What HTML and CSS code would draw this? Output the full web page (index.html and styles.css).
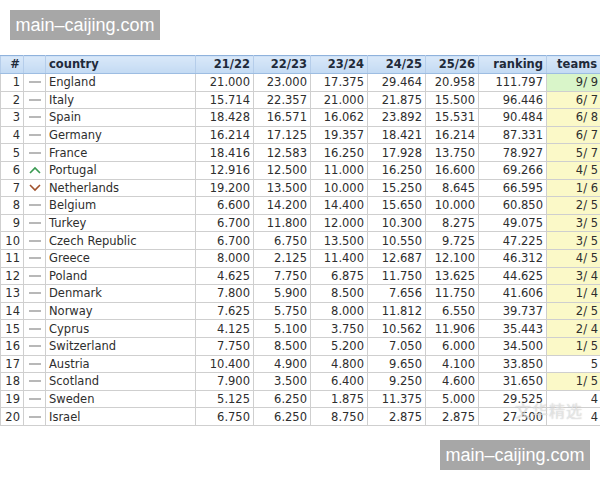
FILE: index.html
```html
<!DOCTYPE html>
<html>
<head>
<meta charset="utf-8">
<link rel="stylesheet" href="styles.css">
</head>
<body>
<div class="page">
  <table class="rank">
    <colgroup>
      <col class="c-num"><col class="c-arrow"><col class="c-country">
      <col class="c-s1"><col class="c-s2"><col class="c-s3"><col class="c-s4"><col class="c-s5">
      <col class="c-rank"><col class="c-teams">
    </colgroup>
    <thead>
      <tr>
        <th class="num">#</th><th></th><th class="left">country</th>
        <th>21/22</th><th>22/23</th><th>23/24</th><th>24/25</th><th>25/26</th>
        <th>ranking</th><th class="teams-h">teams</th>
      </tr>
    </thead>
    <tbody id="rows"></tbody>
  </table>
  <div class="wm wm-tl">main–caijing.com</div>
  <div class="wm wm-br">main–caijing.com</div>
  <div class="faint">文华精选</div>
</div>
<script src="app.js"></script>
</body>
</html>
```
FILE: app.js
```js
const data = [
 [1,'s','England','21.000','23.000','17.375','29.464','20.958','111.797','9/ 9','g'],
 [2,'s','Italy','15.714','22.357','21.000','21.875','15.500','96.446','6/ 7','y'],
 [3,'s','Spain','18.428','16.571','16.062','23.892','15.531','90.484','6/ 8','y'],
 [4,'s','Germany','16.214','17.125','19.357','18.421','16.214','87.331','6/ 7','y'],
 [5,'s','France','18.416','12.583','16.250','17.928','13.750','78.927','5/ 7','y'],
 [6,'u','Portugal','12.916','12.500','11.000','16.250','16.600','69.266','4/ 5','y'],
 [7,'d','Netherlands','19.200','13.500','10.000','15.250','8.645','66.595','1/ 6','y'],
 [8,'s','Belgium','6.600','14.200','14.400','15.650','10.000','60.850','2/ 5','y'],
 [9,'s','Turkey','6.700','11.800','12.000','10.300','8.275','49.075','3/ 5','y'],
 [10,'s','Czech Republic','6.700','6.750','13.500','10.550','9.725','47.225','3/ 5','y'],
 [11,'s','Greece','8.000','2.125','11.400','12.687','12.100','46.312','4/ 5','y'],
 [12,'s','Poland','4.625','7.750','6.875','11.750','13.625','44.625','3/ 4','y'],
 [13,'s','Denmark','7.800','5.900','8.500','7.656','11.750','41.606','1/ 4','y'],
 [14,'s','Norway','7.625','5.750','8.000','11.812','6.550','39.737','2/ 5','y'],
 [15,'s','Cyprus','4.125','5.100','3.750','10.562','11.906','35.443','2/ 4','y'],
 [16,'s','Switzerland','7.750','8.500','5.200','7.050','6.000','34.500','1/ 5','y'],
 [17,'s','Austria','10.400','4.900','4.800','9.650','4.100','33.850','5','w'],
 [18,'s','Scotland','7.900','3.500','6.400','9.250','4.600','31.650','1/ 5','y'],
 [19,'s','Sweden','5.125','6.250','1.875','11.375','5.000','29.525','4','w'],
 [20,'s','Israel','6.750','6.250','8.750','2.875','2.875','27.500','4','w']
];
const icons = {
  s: '<svg width="14" height="8" viewBox="0 0 14 8"><line x1="1" y1="4" x2="13" y2="4" stroke="#9a9a9a" stroke-width="1.4"/></svg>',
  u: '<svg width="14" height="8" viewBox="0 0 14 8"><polyline points="2,7 7,2 12,7" fill="none" stroke="#3a9a52" stroke-width="1.6"/></svg>',
  d: '<svg width="14" height="8" viewBox="0 0 14 8"><polyline points="2,1 7,6 12,1" fill="none" stroke="#a0522d" stroke-width="1.6"/></svg>'
};
const tb = document.getElementById('rows');
tb.innerHTML = data.map(r => `<tr>
<td class="num">${r[0]}</td><td class="arrow">${icons[r[1]]}</td><td class="left">${r[2]}</td>
<td>${r[3]}</td><td>${r[4]}</td><td>${r[5]}</td><td>${r[6]}</td><td>${r[7]}</td><td>${r[8]}</td>
<td class="teams t-${r[10]}">${r[9]}</td></tr>`).join('');
```
FILE: styles.css
```css
html, body { margin: 0; padding: 0; background: #fff; }
.page {
  position: relative;
  width: 600px;
  height: 480px;
  overflow: hidden;
  padding-top: 55px;
  box-sizing: border-box;
  font-family: "DejaVu Sans", Verdana, sans-serif;
}
.rank {
  width: 600px;
  table-layout: fixed;
  border-collapse: collapse;
  font-size: 11.5px;
  color: #2e2e2e;
}
.c-num { width: 23px; }
.c-arrow { width: 22px; }
.c-country { width: 150px; }
.c-s1 { width: 58px; }
.c-s2 { width: 57px; }
.c-s3 { width: 57px; }
.c-s4 { width: 58px; }
.c-s5 { width: 53px; }
.c-rank { width: 68px; }
.c-teams { width: 54px; }
.rank th {
  height: 17px;
  padding: 0 3px 0 0;
  text-align: right;
  font-weight: bold;
  color: #1f2a3a;
  background: linear-gradient(#d9e8f9, #c3daf3);
  border-top: 1px solid #8fb2dc;
  border-bottom: 1px solid #9dbde2;
  border-left: 1px solid #b5cdea;
  border-right: 1px solid #b5cdea;
  white-space: nowrap;
  line-height: 17px;
}
.rank th.left { text-align: left; padding-left: 3px; }
.rank td {
  height: 16.6px;
  padding: 0 3px 0 0;
  text-align: right;
  border: 1px solid #cfcfcf;
  white-space: nowrap;
  line-height: 16px;
}
.rank td.left { text-align: left; padding-left: 3px; }
.rank td.arrow { text-align: center; padding: 0; }
.rank td.arrow svg { display: block; margin: 0 auto; }
.rank td.teams { padding-right: 2px; }
.t-g { background: #d9f5c9; }
.t-y { background: #fbf9c8; }
.t-w { background: #fff; }
.wm {
  position: absolute;
  width: 150px;
  height: 30px;
  background: #a7a7a7;
  color: #fff;
  font-family: "Liberation Sans", Arial, sans-serif;
  font-size: 18px;
  line-height: 30px;
  text-align: center;
}
.wm-tl { left: 10px; top: 10px; }
.wm-br { left: 440px; top: 440px; }
.faint {
  position: absolute;
  left: 515px;
  top: 398px;
  font-family: "Noto Sans CJK SC", sans-serif;
  font-size: 16px;
  color: rgba(255,255,255,0.55);
  text-shadow: 0 0 1px rgba(120,120,120,0.5);
  letter-spacing: 1px;
}
```
